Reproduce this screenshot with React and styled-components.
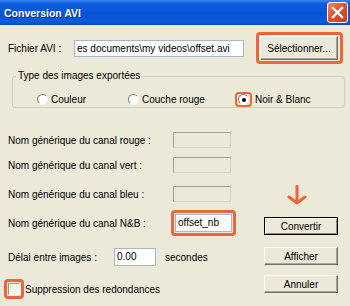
import React from 'react';
import styled, { createGlobalStyle } from 'styled-components';

const ORANGE = '#EA673D';

const GlobalStyle = createGlobalStyle`
  html, body {
    margin: 0;
    padding: 0;
  }
  body {
    font-family: "Liberation Sans", Arial, sans-serif;
    font-size: 10px;
    color: #000;
    background: #ECE9D8;
  }
`;

const Window = styled.div`
  width: 350px;
  height: 306px;
  background: #ECE9D8;
  overflow: hidden;
  display: flex;
  flex-direction: column;
`;

const TitleBar = styled.div`
  flex: none;
  height: 25px;
  display: flex;
  align-items: center;
  justify-content: space-between;
  padding: 0 2px 0 4px;
  background: linear-gradient(
    #3B86EE 0%,
    #0C5FDC 14%,
    #0654D6 55%,
    #0A5BD9 88%,
    #0848BA 100%
  );
`;

const Title = styled.span`
  color: #fff;
  font-weight: bold;
  font-size: 10.5px;
  text-shadow: 1px 1px 0 #0B2F8A;
`;

const CloseButton = styled.div`
  width: 19px;
  height: 19px;
  border: 1px solid #fff;
  border-radius: 3px;
  background: linear-gradient(135deg, #F0896A 0%, #DD5430 45%, #C43C18 100%);
  display: flex;
  align-items: center;
  justify-content: center;
`;

const FileRow = styled.div`
  display: flex;
  align-items: center;
  padding: 7px 0 0 8px;
`;

const Label = styled.span`
  flex: none;
  width: ${({ $width }) => $width}px;
  white-space: nowrap;
`;

const TextField = styled.div`
  flex: none;
  box-sizing: border-box;
  width: ${({ $width }) => $width}px;
  height: ${({ $height }) => $height || 18}px;
  padding: 0 2px;
  background: #fff;
  border: 1px solid #A7B6C9;
  line-height: ${({ $height }) => ($height || 18) - 2}px;
  white-space: nowrap;
  overflow: hidden;
`;

const DisabledField = styled.div`
  flex: none;
  box-sizing: border-box;
  width: 58px;
  height: 16px;
  background: #ECE9D8;
  border: 1px solid;
  border-color: #A6A290 #D6D3C4 #D6D3C4 #A6A290;
`;

const Highlight = styled.div`
  flex: none;
  display: flex;
  align-items: center;
  border: 3px solid ${ORANGE};
  border-radius: 4px;
  padding: ${({ $pad }) => $pad || '1px'};
  margin-left: ${({ $left }) => $left || 0}px;
`;

const Button = styled.div`
  box-sizing: border-box;
  width: ${({ $width }) => $width || 74}px;
  height: ${({ $height }) => $height || 18}px;
  display: flex;
  align-items: center;
  justify-content: center;
  background: #ECE9D8;
  border: 1px solid;
  border-color: ${({ $default }) =>
    $default ? '#000' : '#FFFFFF #6E6D67 #6E6D67 #FFFFFF'};
  box-shadow: ${({ $default }) =>
    $default
      ? 'inset 1px 1px 0 #fff, inset -1px -1px 0 #8C8A80'
      : 'inset -1px -1px 0 #A9A79B'};
  margin-top: ${({ $top }) => $top || 0}px;
`;

const GroupBox = styled.fieldset`
  min-width: 0;
  margin: 6px 5px 0 12px;
  padding: 10px 0 3px 3px;
  border: 1px solid #D0CDBD;
  border-radius: 3px;
`;

const GroupLegend = styled.legend`
  padding: 0 2px;
  line-height: 12px;
`;

const RadioGrid = styled.div`
  display: grid;
  grid-template-columns: 91px 110px auto;
  margin-left: 21px;
  height: 12px;
  align-items: center;
`;

const RadioItem = styled.div`
  display: flex;
  align-items: center;
  gap: 3px;
`;

const RadioMark = styled.span`
  flex: none;
  box-sizing: border-box;
  width: 11px;
  height: 11px;
  border-radius: 50%;
  border: 1px solid;
  border-color: #8A877A #F4F3EE #F4F3EE #8A877A;
  background: radial-gradient(circle at 60% 60%, #fff 55%, #E2E0D6 100%);
  display: flex;
  align-items: center;
  justify-content: center;
  &::after {
    content: '';
    width: 4px;
    height: 4px;
    border-radius: 50%;
    background: ${({ $checked }) => ($checked ? '#000' : 'transparent')};
  }
`;

const RadioHighlight = styled.span`
  display: flex;
  border: 2px solid ${ORANGE};
  border-radius: 4px;
  padding: 0 1px;
  margin-left: -3px;
`;

const Lower = styled.div`
  display: flex;
  justify-content: space-between;
`;

const LeftColumn = styled.div`
  display: flex;
  flex-direction: column;
  padding-left: 8px;
`;

const FieldRow = styled.div`
  display: flex;
  align-items: center;
  height: ${({ $height }) => $height || 20}px;
  margin-top: ${({ $top }) => $top}px;
`;

const Unit = styled.span`
  margin-left: 9px;
`;

const CheckBox = styled.span`
  box-sizing: border-box;
  width: 12px;
  height: 12px;
  background: #F3F2EC;
  border: 1px solid;
  border-color: #9C998A #fff #fff #9C998A;
`;

const CheckLabel = styled.span`
  margin-left: 1px;
`;

const RightColumn = styled.div`
  display: flex;
  flex-direction: column;
  width: 74px;
  margin-right: 12px;
`;

const Arrow = styled.svg`
  display: block;
  margin-top: 77px;
`;

function Radio({ label, checked, highlight }) {
  const mark = <RadioMark $checked={checked} />;
  return (
    <RadioItem>
      {highlight ? <RadioHighlight>{mark}</RadioHighlight> : mark}
      <span>{label}</span>
    </RadioItem>
  );
}

export default function App() {
  return (
    <>
      <GlobalStyle />
      <Window>
        <TitleBar>
          <Title>Conversion AVI</Title>
          <CloseButton>
            <svg width="13" height="13" viewBox="0 0 13 13">
              <path
                d="M2 2 L11 11 M11 2 L2 11"
                stroke="#fff"
                strokeWidth="2.4"
                strokeLinecap="square"
              />
            </svg>
          </CloseButton>
        </TitleBar>

        <FileRow>
          <Label $width={66}>Fichier AVI :</Label>
          <TextField $width={170} $height={17}>
            es documents\my videos\offset.avi
          </TextField>
          <Highlight $left={12} $pad="1px 2px 1px 1px">
            <Button $width={78} $height={24}>Sélectionner...</Button>
          </Highlight>
        </FileRow>

        <GroupBox>
          <GroupLegend>Type des images exportées</GroupLegend>
          <RadioGrid>
            <Radio label="Couleur" />
            <Radio label="Couche rouge" />
            <Radio label="Noir &amp; Blanc" checked highlight />
          </RadioGrid>
        </GroupBox>

        <Lower>
          <LeftColumn>
            <FieldRow $top={22}>
              <Label $width={165}>Nom générique du canal rouge :</Label>
              <DisabledField />
            </FieldRow>
            <FieldRow $top={5}>
              <Label $width={165}>Nom générique du canal vert :</Label>
              <DisabledField />
            </FieldRow>
            <FieldRow $top={9}>
              <Label $width={165}>Nom générique du canal bleu :</Label>
              <DisabledField />
            </FieldRow>
            <FieldRow $top={6} $height={26}>
              <Label $width={163}>Nom générique du canal N&amp;B :</Label>
              <Highlight>
                <TextField $width={57} $height={18}>offset_nb</TextField>
              </Highlight>
            </FieldRow>
            <FieldRow $top={11}>
              <Label $width={106}>Délai entre images :</Label>
              <TextField $width={42} $height={18}>0.00</TextField>
              <Unit>secondes</Unit>
            </FieldRow>
            <FieldRow $top={12}>
              <Highlight $left={-4}>
                <CheckBox />
              </Highlight>
              <CheckLabel>Suppression des redondances</CheckLabel>
            </FieldRow>
          </LeftColumn>

          <RightColumn>
            <Arrow width="74" height="26" viewBox="0 0 74 26">
              <path
                d="M33 1 L33 18 M25 12 L33 18 L41 12"
                fill="none"
                stroke={ORANGE}
                strokeWidth="3"
                strokeLinecap="round"
                strokeLinejoin="round"
              />
            </Arrow>
            <Button $default $top={6}>Convertir</Button>
            <Button $top={12}>Afficher</Button>
            <Button $top={10}>Annuler</Button>
          </RightColumn>
        </Lower>
      </Window>
    </>
  );
}
